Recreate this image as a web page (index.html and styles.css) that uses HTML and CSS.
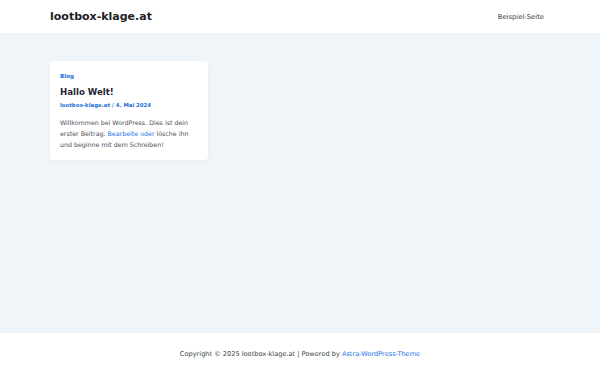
FILE: index.html
```html
<!DOCTYPE html>
<html lang="de">
<head>
    <meta charset="UTF-8">
    <meta name="viewport" content="width=device-width, initial-scale=1.0">
    <title>lootbox-klage.at</title>
    <link rel="stylesheet" href="styles.css">
</head>
<body>

    <header class="site-header">
        <a class="site-title" href="#">lootbox-klage.at</a>
        <nav class="main-nav">
            <a href="#">Beispiel-Seite</a>
        </nav>
    </header>

    <main class="site-content">
        <article class="post-card">
            <a class="post-cat" href="#">Blog</a>
            <h2 class="post-title">Hallo Welt!</h2>
            <div class="post-meta"><a href="#">lootbox-klage.at</a> / <a href="#">4. Mai 2024</a></div>
            <p class="post-excerpt">Willkommen bei WordPress. Dies ist dein erster Beitrag. <a href="#">Bearbeite oder</a> lösche ihn und beginne mit dem Schreiben!</p>
        </article>
    </main>

    <footer class="site-footer">
        <p>Copyright © 2025 lootbox-klage.at | Powered by <a href="#">Astra-WordPress-Theme</a></p>
    </footer>

</body>
</html>
```

FILE: styles.css
```css
body {
    margin: 0;
    font-family: "DejaVu Sans", sans-serif;
    color: #3a3a3a;
    background: #f0f5fa;
    height: 375px;
    display: flex;
    flex-direction: column;
}

a {
    text-decoration: none;
}

.site-header {
    height: 33px;
    background: #ffffff;
    display: flex;
    align-items: center;
    justify-content: space-between;
    padding: 0 56px 0 50px;
    box-sizing: border-box;
}

.site-title {
    font-size: 11px;
    font-weight: bold;
    color: #222222;
}

.main-nav {
    font-size: 6.8px;
}

.main-nav a {
    color: #3a3f4a;
}

.site-content {
    flex: 1;
    padding: 28px 50px;
}

.post-card {
    width: 158px;
    box-sizing: border-box;
    background: #ffffff;
    border-radius: 4px;
    padding: 12px 10px 10px 10px;
    box-shadow: 0 1px 4px rgba(0, 0, 0, 0.04);
}

.post-cat {
    font-size: 5.6px;
    font-weight: bold;
    color: #1e6fd9;
    display: block;
}

.post-title {
    margin: 8px 0 5px;
    font-size: 8.6px;
    font-weight: bold;
    color: #1f2430;
}

.post-meta {
    font-size: 5.4px;
    font-weight: bold;
    color: #1e6fd9;
}

.post-meta a {
    color: #1e6fd9;
}

.post-excerpt {
    margin: 9px 0 0;
    font-size: 6.3px;
    line-height: 11px;
    color: #4b4f58;
}

.post-excerpt a {
    color: #1e73e8;
}

.site-footer {
    height: 42px;
    background: #ffffff;
    display: flex;
    align-items: center;
    justify-content: center;
}

.site-footer p {
    margin: 0;
    font-size: 6.6px;
    color: #3a3f4a;
}

.site-footer a {
    color: #1e73e8;
}
```
